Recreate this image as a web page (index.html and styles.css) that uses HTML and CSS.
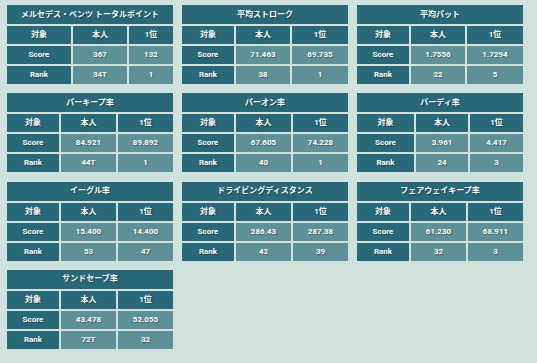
FILE: index.html
```html
<!DOCTYPE html>
<html lang="ja">
<head>
<meta charset="utf-8">
<title>Stats</title>
<link rel="stylesheet" href="styles.css">
</head>
<body>
<div class="board">
  <div class="panel w-a">
    <div class="title">メルセデス・ベンツ トータルポイント</div>
    <div class="hd">対象</div><div class="hd">本人</div><div class="hd">1位</div>
    <div class="lb">Score</div><div class="val">367</div><div class="val">132</div>
    <div class="lb">Rank</div><div class="val">34T</div><div class="val">1</div>
  </div>
  <div class="panel w-b">
    <div class="title">平均ストローク</div>
    <div class="hd">対象</div><div class="hd">本人</div><div class="hd">1位</div>
    <div class="lb">Score</div><div class="val">71.463</div><div class="val">69.735</div>
    <div class="lb">Rank</div><div class="val">38</div><div class="val">1</div>
  </div>
  <div class="panel w-b">
    <div class="title">平均パット</div>
    <div class="hd">対象</div><div class="hd">本人</div><div class="hd">1位</div>
    <div class="lb">Score</div><div class="val">1.7556</div><div class="val">1.7294</div>
    <div class="lb">Rank</div><div class="val">22</div><div class="val">5</div>
  </div>
  <div class="panel w-c">
    <div class="title">パーキープ率</div>
    <div class="hd">対象</div><div class="hd">本人</div><div class="hd">1位</div>
    <div class="lb">Score</div><div class="val">84.921</div><div class="val">89.892</div>
    <div class="lb">Rank</div><div class="val">44T</div><div class="val">1</div>
  </div>
  <div class="panel w-c">
    <div class="title">パーオン率</div>
    <div class="hd">対象</div><div class="hd">本人</div><div class="hd">1位</div>
    <div class="lb">Score</div><div class="val">67.605</div><div class="val">74.228</div>
    <div class="lb">Rank</div><div class="val">40</div><div class="val">1</div>
  </div>
  <div class="panel w-d">
    <div class="title">バーディ率</div>
    <div class="hd">対象</div><div class="hd">本人</div><div class="hd">1位</div>
    <div class="lb">Score</div><div class="val">3.961</div><div class="val">4.417</div>
    <div class="lb">Rank</div><div class="val">24</div><div class="val">3</div>
  </div>
  <div class="panel w-c">
    <div class="title">イーグル率</div>
    <div class="hd">対象</div><div class="hd">本人</div><div class="hd">1位</div>
    <div class="lb">Score</div><div class="val">15.400</div><div class="val">14.400</div>
    <div class="lb">Rank</div><div class="val">53</div><div class="val">47</div>
  </div>
  <div class="panel w-c">
    <div class="title">ドライビングディスタンス</div>
    <div class="hd">対象</div><div class="hd">本人</div><div class="hd">1位</div>
    <div class="lb">Score</div><div class="val">286.43</div><div class="val">287.38</div>
    <div class="lb">Rank</div><div class="val">42</div><div class="val">39</div>
  </div>
  <div class="panel w-c">
    <div class="title">フェアウェイキープ率</div>
    <div class="hd">対象</div><div class="hd">本人</div><div class="hd">1位</div>
    <div class="lb">Score</div><div class="val">61.230</div><div class="val">68.911</div>
    <div class="lb">Rank</div><div class="val">32</div><div class="val">3</div>
  </div>
  <div class="panel w-c">
    <div class="title">サンドセーブ率</div>
    <div class="hd">対象</div><div class="hd">本人</div><div class="hd">1位</div>
    <div class="lb">Score</div><div class="val">43.478</div><div class="val">52.055</div>
    <div class="lb">Rank</div><div class="val">72T</div><div class="val">32</div>
  </div>
</div>
</body>
</html>
```
FILE: styles.css
```css
html, body {
  margin: 0;
  padding: 0;
  background: #cfe2de;
  height: 100%;
}
body {
  font-family: Roboto, "Noto Sans CJK JP", sans-serif;
  font-size: 8px;
  font-weight: bold;
  color: #ffffff;
}
.board {
  display: grid;
  grid-template-columns: repeat(3, 166px);
  column-gap: 9px;
  row-gap: 9.33px;
  padding: 5px 0 0 7px;
}
.panel {
  display: grid;
  grid-template-rows: 19px 18px 18px 18px;
  gap: 2px;
}
.w-a { grid-template-columns: 64px 54px 44px; }
.w-b { grid-template-columns: 52px 54px 56px; }
.w-c { grid-template-columns: 52px 55px 55px; }
.w-d { grid-template-columns: 57px 52px 53px; }
.panel > div {
  display: flex;
  align-items: center;
  justify-content: center;
  text-shadow: 1px 1px 1px rgba(0, 0, 0, 0.35);
  white-space: nowrap;
  line-height: 1;
}
.title {
  grid-column: 1 / -1;
  background: #296878;
}
.hd, .lb {
  background: #296878;
}
.val {
  background: #5e9197;
}
```
